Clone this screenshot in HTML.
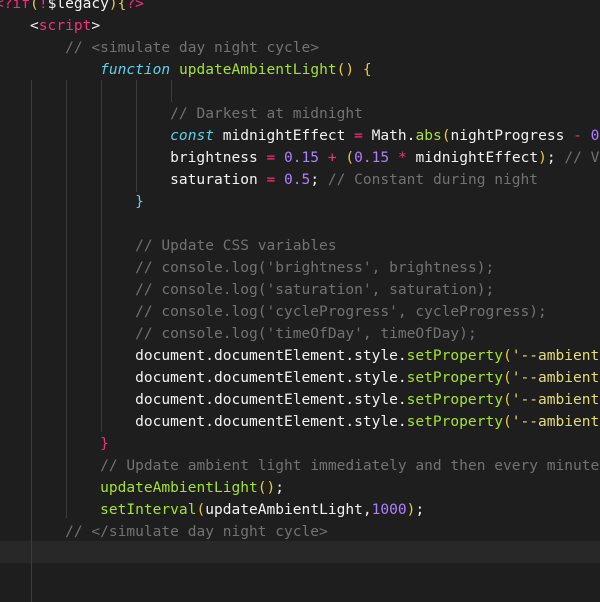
<!DOCTYPE html>
<html><head><meta charset="utf-8"><style>
html,body{margin:0;padding:0;}
body{width:600px;height:602px;background:#1e1e1e;overflow:hidden;position:relative;font-family:"DejaVu Sans Mono","Liberation Mono",monospace;}
.hl{position:absolute;left:0;top:541px;width:600px;height:22px;background:#282828;}
.g{position:absolute;width:1px;background:#3c3c3c;}
pre{position:absolute;left:-5px;top:-7px;margin:0;font-family:inherit;font-size:14.55px;line-height:22px;color:#f2f2f2;white-space:pre;}
.p{color:#f0327a}.c{color:#727272}.k{color:#5fd0e8;font-style:italic}.f{color:#a6e22e}.n{color:#ae81ff}.y{color:#e6db74}.b{color:#e8c93a}
</style></head><body>
<div class="hl"></div>
<div class="g" style="left:31px;top:80px;height:522px"></div>
<div class="g" style="left:66px;top:80px;height:438px"></div>
<div class="g" style="left:101px;top:80px;height:352px"></div>
<div class="g" style="left:136px;top:80px;height:112px"></div>
<div class="g" style="left:171px;top:80px;height:22px"></div>
<pre><span class="p">&lt;?if</span><span class="b">(</span><span class="p">!</span>$legacy<span class="b">){</span><span class="p">?&gt;</span>
    &lt;<span class="p">script</span>&gt;
        <span class="c">// &lt;simulate day night cycle&gt;</span>
            <span class="k">function</span> <span class="f">updateAmbientLight</span><span class="b">()</span> <span class="b">{</span>

                    <span class="c">// Darkest at midnight</span>
                    <span class="k">const</span> midnightEffect <span class="p">=</span> Math.<span class="f">abs</span><span class="b">(</span>nightProgress <span class="p">-</span> <span class="n">0.5</span>
                    brightness <span class="p">=</span> <span class="n">0.15</span> <span class="p">+</span> <span class="b">(</span><span class="n">0.15</span> <span class="p">*</span> midnightEffect<span class="b">)</span>; <span class="c">// V</span>
                    saturation <span class="p">=</span> <span class="n">0.5</span>; <span class="c">// Constant during night</span>
                <span class="k" style="font-style:normal">}</span>

                <span class="c">// Update CSS variables</span>
                <span class="c">// console.log('brightness', brightness);</span>
                <span class="c">// console.log('saturation', saturation);</span>
                <span class="c">// console.log('cycleProgress', cycleProgress);</span>
                <span class="c">// console.log('timeOfDay', timeOfDay);</span>
                document.documentElement.style.<span class="f">setProperty</span><span class="b">(</span><span class="y">'--ambient</span>
                document.documentElement.style.<span class="f">setProperty</span><span class="b">(</span><span class="y">'--ambient</span>
                document.documentElement.style.<span class="f">setProperty</span><span class="b">(</span><span class="y">'--ambient</span>
                document.documentElement.style.<span class="f">setProperty</span><span class="b">(</span><span class="y">'--ambient</span>
            <span class="p">}</span>
            <span class="c">// Update ambient light immediately and then every minute</span>
            <span class="f">updateAmbientLight</span><span class="b">()</span>;
            <span class="f">setInterval</span><span class="b">(</span>updateAmbientLight,<span class="n">1000</span><span class="b">)</span>;
        <span class="c">// &lt;/simulate day night cycle&gt;</span>
</pre>
</body></html>
